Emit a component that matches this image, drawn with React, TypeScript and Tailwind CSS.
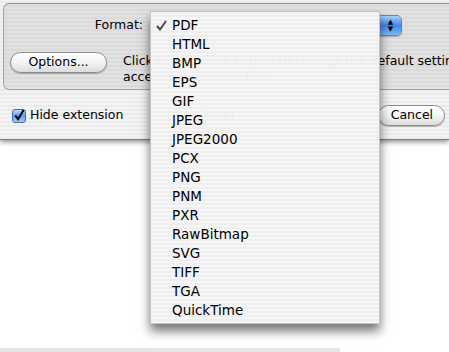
import React from "react";

const formats = [
  "PDF",
  "HTML",
  "BMP",
  "EPS",
  "GIF",
  "JPEG",
  "JPEG2000",
  "PCX",
  "PNG",
  "PNM",
  "PXR",
  "RawBitmap",
  "SVG",
  "TIFF",
  "TGA",
  "QuickTime",
];

function AquaButton({ label, className }: { label: string; className: string }) {
  return (
    <div
      className={`flex h-[21px] items-center justify-center rounded-full border border-[#8c8c8c] bg-gradient-to-b from-white via-[#f4f4f4] to-[#dcdcdc] text-[12.5px] text-black shadow-[0_1px_1px_rgba(0,0,0,0.25)] ${className}`}
    >
      {label}
    </div>
  );
}

export default function App() {
  return (
    <div className="relative h-[352px] w-[449px] overflow-hidden bg-white font-['DejaVu_Sans',sans-serif] text-black">
      {/* sheet */}
      <div className="h-[140px] border-b border-[#7d7d7d] bg-[image:repeating-linear-gradient(0deg,#ebebeb_0px,#ebebeb_2px,#f3f3f3_2px,#f3f3f3_4px)] pt-[3px] shadow-[0_2px_5px_rgba(0,0,0,0.45)]">
        <div className="ml-[3px] h-[87px] w-[480px] rounded-[6px] border border-[#a4a4a4] border-t-[#8f8f8f] bg-black/[0.07]">
          <div className="flex items-center pt-[11px]">
            <div className="w-[139px] text-right text-[12.5px]">Format:</div>
            <div className="ml-[7px] flex h-[21px] w-[252px] overflow-hidden rounded-[5px] border border-[#7f7f7f] shadow-[0_1px_1px_rgba(0,0,0,0.25)]">
              <div className="flex flex-1 items-center bg-gradient-to-b from-white to-[#e8e8e8] pl-[22px] text-[12.5px]">
                PDF
              </div>
              <div className="flex w-[21px] flex-col items-center justify-center bg-gradient-to-b from-[#a9cdf7] via-[#3f86e6] to-[#7fb6f4] text-[7px] leading-[7px] text-black">
                <span>▲</span>
                <span>▼</span>
              </div>
            </div>
          </div>
          <div className="mt-[16px] flex items-start">
            <AquaButton label="Options..." className="ml-[6px] w-[97px] shrink-0" />
            <div className="ml-[16px] mt-[1px] whitespace-nowrap text-[12.5px] leading-[16px]">
              <div>Click the Options button to change the default settings for</div>
              <div>accessing selected files.</div>
            </div>
          </div>
        </div>

        <div className="mt-[15px] flex items-center">
          <div className="ml-[12px] flex h-[14px] w-[14px] items-center justify-center rounded-[3px] border border-[#4a6fa8] bg-gradient-to-b from-[#b9d8fb] via-[#5b9ded] to-[#a6cdf7]">
            <svg width="13" height="13" viewBox="0 0 13 13">
              <path d="M2.5 6.5 L5.5 10.5 L11.5 0.5" fill="none" stroke="#000" strokeWidth="2.2" />
            </svg>
          </div>
          <span className="ml-[4px] text-[12.5px]">Hide extension</span>
          <AquaButton label="New Folder" className="ml-[30px] w-[95px] text-[#333]" />
          <AquaButton label="Cancel" className="ml-[130px] w-[67px]" />
        </div>
      </div>

      <div className="h-[208px]" />
      <div className="h-[4px] w-[340px] bg-[#e6e6e6]" />

      {/* open popup menu */}
      <div className="absolute left-[150px] top-[11px] w-[230px] border border-[#c4c4c4] bg-[image:repeating-linear-gradient(0deg,rgba(246,246,246,0.975)_0px,rgba(246,246,246,0.975)_2px,rgba(238,238,238,0.975)_2px,rgba(238,238,238,0.975)_4px)] pb-[3px] pt-[4px] shadow-[0_7px_10px_rgba(0,0,0,0.55)]">
        {formats.map((f, i) => (
          <div key={f} className="relative flex h-[19px] items-center pl-[21px] text-[13.5px]">
            {i === 0 && (
              <svg className="absolute left-[5px] top-[4px]" width="11" height="11" viewBox="0 0 11 11">
                <path d="M1 6 L4 9.5 L10 1" fill="none" stroke="#4a4a4a" strokeWidth="2" />
              </svg>
            )}
            {f}
          </div>
        ))}
      </div>
    </div>
  );
}
